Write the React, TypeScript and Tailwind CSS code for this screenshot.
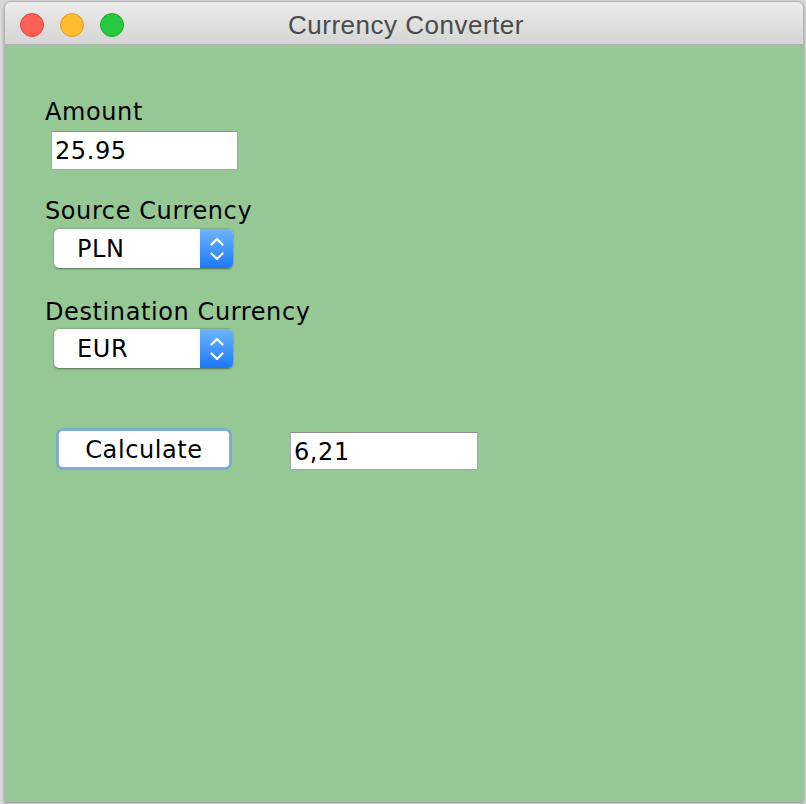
import React from 'react'

const labelCls =
  "h-[28px] leading-[28px] text-[24px] tracking-[0.6px] text-black font-['DejaVu_Sans',sans-serif]"

const Stepper = () => (
  <div className="w-[33px] h-full rounded-r-[5px] bg-gradient-to-b from-[#6cb4fb] to-[#1b78f8] flex items-center justify-center">
    <svg width="18" height="28" viewBox="0 0 18 28" fill="none">
      <path d="M3.5 9.5 L9 4 L14.5 9.5" stroke="white" strokeWidth="2.2" strokeLinecap="round" strokeLinejoin="round" />
      <path d="M3.5 18.5 L9 24 L14.5 18.5" stroke="white" strokeWidth="2.2" strokeLinecap="round" strokeLinejoin="round" />
    </svg>
  </div>
)

const ComboBox = ({ value, className }: { value: string; className?: string }) => (
  <div
    className={`ml-[9px] w-[179px] h-[39px] flex bg-white rounded-[5px] shadow-[0_0.5px_2px_rgba(0,0,0,0.45)] ${className ?? ''}`}
  >
    <div className="flex-1 flex items-center pl-[23px] pt-[1px] text-[24px] tracking-[0.6px] text-black font-['DejaVu_Sans',sans-serif]">
      {value}
    </div>
    <Stepper />
  </div>
)

const TextField = ({ value, className }: { value: string; className?: string }) => (
  <input
    readOnly
    value={value}
    className={`bg-white border border-[#a9a9a9] border-t-[#8f8f8f] pl-[3px] pt-[1px] text-[24px] tracking-[0.6px] text-black outline-none font-['DejaVu_Sans',sans-serif] ${className ?? ''}`}
  />
)

const App: React.FC = () => {
  return (
    <div className="w-[806px] h-[804px] bg-[#d9d9d9] pl-[4px] pt-[1px] overflow-hidden">
      <div className="w-[800px] h-[801px] rounded-t-[7px] border border-[#b4b4b4] overflow-hidden flex flex-col shadow-[0_1px_3px_rgba(0,0,0,0.35)]">
        {/* title bar */}
        <div className="relative h-[43px] shrink-0 bg-gradient-to-b from-[#ececec] to-[#d5d5d5] border-b border-[#b1b1b1] flex items-center">
          <div className="flex gap-[16px] pl-[15px] pt-[3px]">
            <span className="w-[24px] h-[24px] rounded-full bg-[#fe5f57] border border-[#e0443e]" />
            <span className="w-[24px] h-[24px] rounded-full bg-[#febc2e] border border-[#dea123]" />
            <span className="w-[24px] h-[24px] rounded-full bg-[#28c840] border border-[#1aab29]" />
          </div>
          <div className="absolute inset-0 flex items-center justify-center pl-[4px] pt-[4px] text-[26px] tracking-[0.5px] text-[#4b4b4b] font-['Liberation_Sans',Arial,sans-serif]">
            Currency Converter
          </div>
        </div>

        {/* content */}
        <div className="flex-1 bg-[#96c896] pl-[40px] pt-[53px] flex flex-col items-start">
          <div className={labelCls}>Amount</div>
          <TextField value="25.95" className="mt-[5px] ml-[6px] w-[187px] h-[39px]" />

          <div className={`${labelCls} mt-[27px]`}>Source Currency</div>
          <ComboBox value="PLN" className="mt-[4px]" />

          <div className={`${labelCls} mt-[30px]`}>Destination Currency</div>
          <ComboBox value="EUR" className="mt-[3px]" />

          <div className="mt-[61px] flex items-start">
            <button className="ml-[12px] w-[174px] h-[40px] pt-[1px] bg-white rounded-[6px] border-2 border-[#7eade6] shadow-[0_0_0_0.5px_#5b8fd6] text-[24px] tracking-[0.6px] text-black font-['DejaVu_Sans',sans-serif] flex items-center justify-center">
              Calculate
            </button>
            <TextField value="6,21" className="ml-[59px] mt-[3px] w-[188px] h-[38px]" />
          </div>
        </div>
      </div>
    </div>
  )
}

export default App
